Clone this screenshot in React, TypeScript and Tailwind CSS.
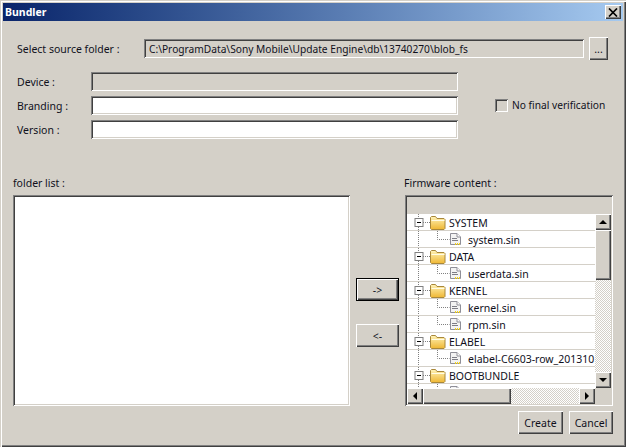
const raised = 'bg-[#d4d0c8] shadow-[inset_1px_1px_0_#fff,inset_-1px_-1px_0_#404040,inset_-2px_-2px_0_#808080]';
const sunken = 'shadow-[inset_1px_1px_0_#808080,inset_-1px_-1px_0_#fff,inset_2px_2px_0_#404040,inset_-2px_-2px_0_#d4d0c8]';
const dither = 'bg-[repeating-conic-gradient(#d4d0c8_0_25%,#fff_0_50%)] bg-[length:2px_2px]';

function FolderIcon() {
  return (
    <svg width="16" height="15" viewBox="0 0 16 15" className="shrink-0">
      <defs>
        <linearGradient id="fold" x1="0" y1="0" x2="0" y2="1">
          <stop offset="0" stopColor="#fff3b8" />
          <stop offset="1" stopColor="#efb733" />
        </linearGradient>
      </defs>
      <path d="M0.500 13.500V2.500l1-1h4l1.500 2h7l1 1v9l-1 1H1.500z" fill="url(#fold)" stroke="#a8873a" />
      <path d="M1.500 5.500h13" stroke="#fffce6" fill="none" />
    </svg>
  );
}

function FileIcon() {
  return (
    <svg width="11" height="12" viewBox="0 0 11 12" className="shrink-0">
      <path d="M0.500 0.500h6.500l3.500 3.500v7.500h-10z" fill="#f3f3f3" stroke="#8f8f98" />
      <path d="M7 0.500v3.500h3.500" fill="#fff" stroke="#8f8f98" />
      <path d="M2 5.500h5M2 7.500h6" stroke="#7d7d86" />
      <path d="M5 10.500h5M5 11.500h6" stroke="#f2d21b" strokeDasharray="1 1" />
    </svg>
  );
}

function FolderGuide() {
  return (
    <svg width="23" height="16" viewBox="0 0 23 16" className="shrink-0">
      <path d="M11.500 0v4M11.500 13v3M16 8.500h7" stroke="#808080" strokeDasharray="1 1" fill="none" />
      <rect x="8" y="4.500" width="8" height="8" fill="#fff" stroke="#808080" />
      <path d="M10 8.500h4" stroke="#000" />
    </svg>
  );
}

function FileGuide() {
  return (
    <svg width="43" height="16" viewBox="0 0 43 16" className="shrink-0">
      <path d="M11.500 0v16M30.500 0v8.500h12" stroke="#808080" strokeDasharray="1 1" fill="none" />
    </svg>
  );
}

const treeRows = [
  { label: 'SYSTEM', folder: true },
  { label: 'system.sin', folder: false },
  { label: 'DATA', folder: true },
  { label: 'userdata.sin', folder: false },
  { label: 'KERNEL', folder: true },
  { label: 'kernel.sin', folder: false },
  { label: 'rpm.sin', folder: false },
  { label: 'ELABEL', folder: true },
  { label: 'elabel-C6603-row_201310', folder: false },
  { label: 'BOOTBUNDLE', folder: true },
  { label: '', folder: false },
];

function ScrollButton({ d, className }: { d: string; className: string }) {
  return (
    <div className={`${raised} flex items-center justify-center shrink-0 ${className}`}>
      <svg width="8" height="8" viewBox="0 0 8 8">
        <path d={d} fill="#000" />
      </svg>
    </div>
  );
}

function Field({ label, disabled }: { label: string; disabled?: boolean }) {
  return (
    <div className="flex items-center h-[19px]">
      <span className="w-[74px]">{label}</span>
      <div className={`w-[367px] h-[19px] ${sunken} ${disabled ? 'bg-[#d4d0c8]' : 'bg-white'}`} />
    </div>
  );
}

export default function App() {
  return (
    <div className="w-[626px] h-[447px] p-[3px] bg-[#d4d0c8] text-[10.5px] leading-[14px] text-[#10101c] font-['Noto_Sans',sans-serif] shadow-[inset_1px_1px_0_#d4d0c8,inset_2px_2px_0_#fff,inset_-1px_-1px_0_#404040,inset_-2px_-2px_0_#808080] overflow-hidden">
      <div className="h-[18px] flex items-center justify-between pl-[2px] pr-[2px] bg-gradient-to-r from-[#0a246a] to-[#a6caf0]">
        <span className="text-white font-bold">Bundler</span>
        <div className={`w-[16px] h-[14px] ${raised} flex items-center justify-center`}>
          <svg width="10" height="9" viewBox="0 0 10 9">
            <path d="M1 0.500l8 8M9 0.500l-8 8" stroke="#000" strokeWidth="1.700" fill="none" />
          </svg>
        </div>
      </div>

      <div className="pl-[14px] pt-[16px] flex items-center">
        <span className="w-[127px]">Select source folder :</span>
        <div className={`w-[440px] h-[19px] ${sunken} flex items-center pl-[5px] whitespace-nowrap text-[10.2px]`}>
          C:\ProgramData\Sony Mobile\Update Engine\db\13740270\blob_fs
        </div>
        <div className={`ml-[5px] w-[19px] h-[23px] ${raised} flex items-center justify-center`}>...</div>
      </div>

      <div className="pl-[14px] pt-[12px] flex items-start">
        <div className="flex flex-col gap-[5px]">
          <Field label="Device :" disabled />
          <Field label="Branding :" />
          <Field label="Version :" />
        </div>
        <label className="ml-[37px] mt-[26px] flex items-center gap-[4px]">
          <span className={`w-[13px] h-[13px] bg-[#d4d0c8] ${sunken}`} />
          <span className="whitespace-nowrap text-[10.2px]">No final verification</span>
        </label>
      </div>

      <div className="pl-[10px] pt-[37px] flex items-start">
        <div className="w-[337px]">
          <div className="h-[19px]">folder list :</div>
          <div className={`h-[211px] bg-white ${sunken}`} />
        </div>
        <div className="ml-[6px] w-[43px] pt-[102px] flex flex-col gap-[23px]">
          <div className={`h-[23px] flex items-center justify-center border border-black ${raised}`}>-&gt;</div>
          <div className={`h-[23px] flex items-center justify-center ${raised}`}>&lt;-</div>
        </div>
        <div className="ml-[6px] w-[208px]">
          <div className="h-[19px] -ml-px">Firmware content :</div>
          <div className={`h-[211px] p-[2px] ${sunken}`}>
            <div className="h-[17px]" />
            <div className="flex h-[174px]">
              <div className="w-[188px] bg-white overflow-hidden">
                {treeRows.map((row, i) => (
                  <div key={i} className="h-[17px] flex items-center border-b border-[#d4d0c8] whitespace-nowrap overflow-hidden">
                    {row.folder ? (
                      <>
                        <FolderGuide />
                        <FolderIcon />
                        <span className="ml-[3px] mt-[2px]">{row.label}</span>
                      </>
                    ) : (
                      <>
                        <FileGuide />
                        <FileIcon />
                        <span className="ml-[7px] mt-[2px]">{row.label}</span>
                      </>
                    )}
                  </div>
                ))}
              </div>
              <div className="w-[16px] flex flex-col">
                <ScrollButton d="M4 2l4 4H0z" className="h-[16px]" />
                <div className={`h-[50px] ${raised}`} />
                <div className={`flex-1 ${dither}`} />
                <ScrollButton d="M4 6L0 2h8z" className="h-[16px]" />
              </div>
            </div>
            <div className="flex h-[16px]">
              <div className="w-[188px] flex">
                <ScrollButton d="M2 4l4-4v8z" className="w-[16px]" />
                <div className={`w-[88px] ${raised}`} />
                <div className={`flex-1 ${dither}`} />
                <ScrollButton d="M6 4L2 0v8z" className="w-[16px]" />
              </div>
            </div>
          </div>
        </div>
      </div>

      <div className="pt-[5px] pl-[515px] flex gap-[6px]">
        <div className={`w-[45px] h-[23px] flex items-center justify-center ${raised}`}>Create</div>
        <div className={`w-[44px] h-[23px] flex items-center justify-center ${raised}`}>Cancel</div>
      </div>
    </div>
  );
}
